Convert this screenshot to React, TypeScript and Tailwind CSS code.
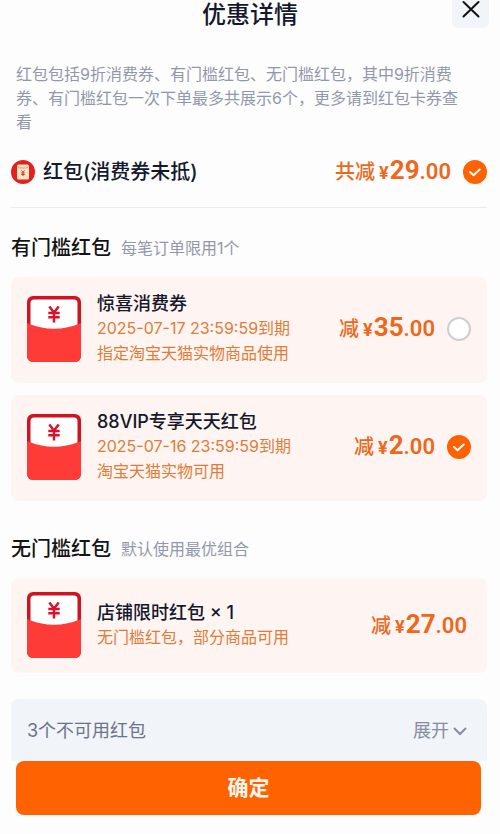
import { useState } from 'react';

interface Coupon {
  id: string;
  title: string;
  lines: string[];
  yuan: string;
  selectable: boolean;
}

const thresholdCoupons: Coupon[] = [
  {
    id: 'surprise',
    title: '惊喜消费券',
    lines: ['2025-07-17 23:59:59到期', '指定淘宝天猫实物商品使用'],
    yuan: '35',
    selectable: true,
  },
  {
    id: 'vip',
    title: '88VIP专享天天红包',
    lines: ['2025-07-16 23:59:59到期', '淘宝天猫实物可用'],
    yuan: '2',
    selectable: true,
  },
];

const freeCoupons: Coupon[] = [
  {
    id: 'shop',
    title: '店铺限时红包 × 1',
    lines: ['无门槛红包，部分商品可用'],
    yuan: '27',
    selectable: false,
  },
];

function Envelope() {
  return (
    <svg viewBox="0 0 54 66" className="w-[54px] h-[66px] shrink-0" aria-hidden="true">
      <rect width="54" height="66" rx="6" fill="#cf1322" />
      <path d="M3.500 7a3.500 3.500 0 0 1 3.500-3.500h40a3.500 3.500 0 0 1 3.500 3.500v28h-47z" fill="#fff" />
      <path d="M0 27Q27 38.500 54 27V60a6 6 0 0 1-6 6H6a6 6 0 0 1-6-6z" fill="#ff3b37" />
      <path
        d="M22.300 10.500l4.700 6 4.700-6M21.300 17h11.400M21.300 21.200h11.400M27 16v10.500"
        fill="none"
        stroke="#d9122b"
        strokeWidth="2.500"
      />
    </svg>
  );
}

function RedPacketBadge() {
  return (
    <svg viewBox="0 0 24 24" className="w-6 h-6 shrink-0" aria-hidden="true">
      <circle cx="12" cy="12" r="12" fill="#e5211f" />
      <rect x="6" y="4.500" width="12" height="15" rx="1.500" fill="#fce4c4" />
      <path d="M6.500 6.500q1 1.500 3 1.500h5q2 0 3-1.500" fill="none" stroke="#e8966f" strokeWidth="1" />
      <path d="M10.500 10.500l1.500 2 1.500-2M10.300 13h3.400M10.300 14.500h3.400M12 12.500v3.500" fill="none" stroke="#d8342a" strokeWidth="1" />
    </svg>
  );
}

function Price({ label, yuan }: { label: string; yuan: string }) {
  return (
    <div className="flex items-baseline whitespace-nowrap font-bold text-[#ec681c] leading-8">
      <span className="text-[20px] font-medium">{label}</span>
      <span className="ml-1 font-[Roboto,sans-serif] text-[18px]">¥</span>
      <span className="ml-px font-[Roboto,sans-serif] text-[26px]">{yuan}</span>
      <span className="font-[Roboto,sans-serif] text-[22px] font-semibold">.00</span>
    </div>
  );
}

interface CheckProps {
  label: string;
  checked: boolean;
  onChange: () => void;
}

function Check({ label, checked, onChange }: CheckProps) {
  return (
    <label className="relative block w-6 h-6 shrink-0">
      <input
        type="checkbox"
        aria-label={label}
        checked={checked}
        onChange={onChange}
        className="peer block w-6 h-6 appearance-none rounded-full border-2 border-[#cfcfd2] bg-white checked:border-[#ff6200] checked:bg-[#ff6200]"
      />
      <svg
        viewBox="0 0 24 24"
        className="absolute inset-0 hidden pointer-events-none peer-checked:block"
        fill="none"
        stroke="#fff"
        strokeWidth="2"
        strokeLinecap="round"
        strokeLinejoin="round"
        aria-hidden="true"
      >
        <path d="M7 12l3.500 3.200 6.200-5.700" />
      </svg>
    </label>
  );
}

interface CouponCardProps {
  coupon: Coupon;
  selected: boolean;
  onToggle: (id: string) => void;
}

function CouponCard({ coupon, selected, onToggle }: CouponCardProps) {
  return (
    <li
      className={`flex items-center rounded-lg bg-[#fef4f1] pl-4 ${
        coupon.selectable ? 'pt-3.5 pb-[17px] pr-4' : 'pt-3.5 pb-[15px] pr-5'
      }`}
    >
      <Envelope />
      <div className="ml-4 flex-1 min-w-0 text-[16px] leading-[25px] text-[#e07c38]">
        <h3 className="text-[18px] font-medium text-[#14182b]">{coupon.title}</h3>
        {coupon.lines.map((line) => (
          <p key={line}>{line}</p>
        ))}
      </div>
      <Price label="减" yuan={coupon.yuan} />
      {coupon.selectable && (
        <div className="ml-3">
          <Check label={coupon.title} checked={selected} onChange={() => onToggle(coupon.id)} />
        </div>
      )}
    </li>
  );
}

function SectionTitle({ title, hint }: { title: string; hint: string }) {
  return (
    <div className="flex items-center leading-8">
      <h2 className="text-[20px] font-medium text-[#141414]">{title}</h2>
      <span className="ml-2.5 text-[16px] text-[#9298aa]">{hint}</span>
    </div>
  );
}

export default function App() {
  const [selected, setSelected] = useState<string[]>(['vip']);
  const [usePackets, setUsePackets] = useState(true);

  function toggle(id: string) {
    setSelected((ids) => (ids.includes(id) ? ids.filter((i) => i !== id) : [...ids, id]));
  }

  return (
    <div className="min-h-screen bg-[#fdfdfd] pb-5 font-[Inter,'Noto_Sans_CJK_SC',sans-serif]">
      {/* Header */}
      <header className="relative flex justify-center">
        <h1 className="text-[24px] leading-[30px] font-medium text-[#14182b]">优惠详情</h1>
        <button
          type="button"
          aria-label="关闭"
          className="absolute right-[11px] top-0 flex h-7 w-[37px] justify-center rounded-b-md bg-[#f1f4f8]"
        >
          <svg viewBox="0 0 18 18" className="w-[18px] h-[18px]" fill="none" stroke="#111" strokeWidth="2" strokeLinecap="round" aria-hidden="true">
            <path d="M1.500 2l15 14.500M16.500 2l-15 14.500" />
          </svg>
        </button>
      </header>

      <p className="mt-8 pl-4 pr-9 text-[16px] leading-6 text-[#9298aa]">
        红包包括9折消费券、有门槛红包、无门槛红包，其中9折消费券、有门槛红包一次下单最多共展示6个，更多请到红包卡券查看
      </p>

      <main className="pl-[11px] pr-[13px]">
        {/* Total */}
        <div className="mt-5 flex items-center border-b border-[#ebecee] pb-[18px]">
          <RedPacketBadge />
          <span className="ml-2 flex-1 text-[20px] leading-8 font-medium text-[#14182b]">红包(消费券未抵)</span>
          <Price label="共减" yuan="29" />
          <div className="ml-3">
            <Check label="使用红包" checked={usePackets} onChange={() => setUsePackets(!usePackets)} />
          </div>
        </div>

        <section className="mt-6">
          <SectionTitle title="有门槛红包" hint="每笔订单限用1个" />
          <ul className="mt-[13px] flex flex-col gap-3">
            {thresholdCoupons.map((c) => (
              <CouponCard key={c.id} coupon={c} selected={selected.includes(c.id)} onToggle={toggle} />
            ))}
          </ul>
        </section>

        <section className="mt-8">
          <SectionTitle title="无门槛红包" hint="默认使用最优组合" />
          <ul className="mt-[13px]">
            {freeCoupons.map((c) => (
              <CouponCard key={c.id} coupon={c} selected={false} onToggle={toggle} />
            ))}
          </ul>
        </section>

        <div className="mt-[26px] flex items-center justify-between rounded-t-lg bg-[#f1f4f8] pl-4 pr-5 pt-4 pb-[14px] leading-8">
          <span className="text-[18px] text-[#6b7488]">3个不可用红包</span>
          <button type="button" className="flex items-center gap-1 text-[18px] text-[#858da0]">
            展开
            <svg viewBox="0 0 14 14" className="w-3.5 h-3.5" fill="none" stroke="#858da0" strokeWidth="2" aria-hidden="true">
              <path d="M1 4l6 6 6-6" />
            </svg>
          </button>
        </div>
      </main>

      <div className="pl-4 pr-[19px]">
        <button type="button" className="block h-[54px] w-full rounded-lg bg-[#ff6200] text-[21px] font-bold text-[#fff6ee]">
          确定
        </button>
      </div>
    </div>
  );
}
